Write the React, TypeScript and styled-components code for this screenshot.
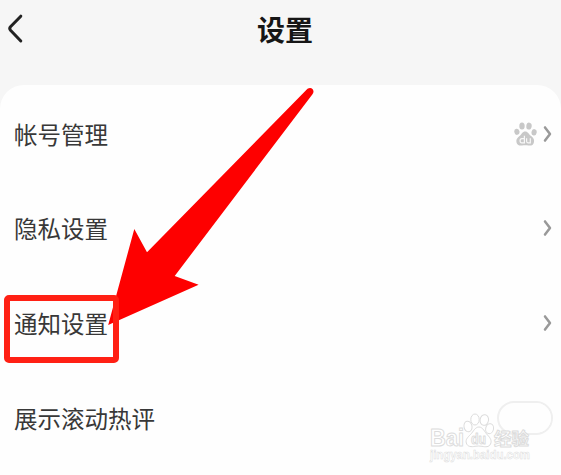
import React, { FC } from 'react';
import styled, { createGlobalStyle } from 'styled-components';

type RowProps = {
    title: string
    children?: React.ReactNode
}

const Chevron: FC = () => (
    <ChevronIcon width="10" height="18" viewBox="0 0 10 18">
        <path d="M2 2.4 L7 9 L2 15.6" />
    </ChevronIcon>
)

const Row: FC<RowProps> = ({title, children}) => (
    <RowBlock>
        <RowTitle>{title}</RowTitle>
        <RowValue>{children}</RowValue>
    </RowBlock>
)

const Paw: FC = () => (
    <svg width="23" height="24" viewBox="0 0 23 24">
        <g fill="#c8c8c8">
            <ellipse cx="2.9" cy="9.8" rx="2.6" ry="3.1" transform="rotate(-10 2.9 9.8)" />
            <ellipse cx="8" cy="4" rx="2.7" ry="3.6" />
            <ellipse cx="15" cy="4.1" rx="2.7" ry="3.5" transform="rotate(8 15 4.1)" />
            <ellipse cx="20.1" cy="10.3" rx="2.6" ry="3.2" transform="rotate(10 20.1 10.3)" />
            <path d="M11.2 9.5 C14 9.5 14.8 12.2 16.8 13.8 C19 15.5 20.6 17.3 20 20 C19.4 23.6 16.8 23.8 14.5 23.5 C12.5 23.2 10 23.2 8 23.5 C5.4 23.9 3 23.2 2.4 20 C1.8 17.2 3.8 15.4 5.8 13.8 C7.7 12.2 8.3 9.5 11.2 9.5 Z" />
        </g>
        <g fill="none" stroke="#f8f8f8" strokeWidth="1.2">
            <path d="M10.4 13.8 V20.8 H7.8 C5.5 20.8 5.5 16.6 7.8 16.6 H10.4" />
            <path d="M12.6 16.2 V19.3 C12.6 20.4 13 20.8 14 20.8 H16.3 V16.2" />
        </g>
    </svg>
)

const Watermark: FC = () => (
    <WatermarkBlock width="120" height="64" viewBox="420 411 120 64">
        <g fill="#fff" stroke="#dcdcdc" strokeWidth="1" strokeLinejoin="round">
            <Latin x="430" y="446" fontSize="24" textLength="34" lengthAdjust="spacingAndGlyphs">Bai</Latin>
            <ellipse cx="468" cy="426.5" rx="4" ry="5.4" transform="rotate(-12 468 426.5)" />
            <ellipse cx="475" cy="419.5" rx="4.2" ry="5.5" />
            <ellipse cx="484.3" cy="420" rx="4.2" ry="5.4" transform="rotate(10 484.3 420)" />
            <ellipse cx="489.6" cy="428.7" rx="3.9" ry="5" transform="rotate(12 489.6 428.7)" />
            <path d="M479 427 C483 427 484.5 432 487.5 435 C490.5 438 492 441 490.5 444 C489 447.3 485.5 447 482 446.3 C479.5 445.9 477.5 445.9 475 446.3 C471.5 447 467.5 447 466.3 443 C465.3 439.5 468 437 470.5 434.5 C473.5 431.5 475 427 479 427 Z" />
            <Latin x="471" y="443.5" fontSize="14" textLength="15" lengthAdjust="spacingAndGlyphs">du</Latin>
            <text x="494" y="445" fontSize="17.5" fontWeight="700" textLength="35" lengthAdjust="spacingAndGlyphs">经验</text>
            <Latin x="430" y="459" fontSize="12" strokeWidth="0.5" textLength="100" lengthAdjust="spacingAndGlyphs">jingyan.baidu.com</Latin>
        </g>
    </WatermarkBlock>
)

export default function App() {
    return (
        <Screen>
            <GlobalStyle />
            <Header>
                <BackButton aria-label="返回">
                    <svg width="18" height="32" viewBox="0 0 18 32">
                        <path d="M14.8 3.2 L4.5 13.8 Q3 15.5 4.5 17.2 L14.8 28" />
                    </svg>
                </BackButton>
                <Title>设置</Title>
            </Header>
            <Card>
                <Row title="帐号管理"><Paw /><Chevron /></Row>
                <Row title="隐私设置"><Chevron /></Row>
                <Row title="通知设置"><Chevron /></Row>
                <Row title="展示滚动热评"><Switch><Knob /></Switch></Row>
            </Card>
            <Arrow width="220" height="250" viewBox="100 80 220 250">
                <path d="M307.5 88.8 Q310.5 86.8 312.7 89.2 Q314.5 91.8 312.3 94.4 L174.7 276 L198.6 284.7 L108.2 325 L134.3 229 L147 252.2 Z" />
            </Arrow>
            <Highlight />
            <Watermark />
        </Screen>
    )
}

const GlobalStyle = createGlobalStyle`
  body {
    margin: 0;
    overflow: hidden;
    background: #fff;
  }
`

const Screen = styled.div`
  position: relative;
  width: 561px;
  height: 475px;
  overflow: hidden;
  background: #f6f6f6;
  color: #383838;
  font-family: "Noto Sans CJK SC", sans-serif;
`

const Header = styled.header`
  display: grid;
  grid-template-columns: 40px 1fr 40px;
  align-items: center;
  height: 60px;
  margin-bottom: 25px;
`

const BackButton = styled.button`
  display: flex;
  padding: 0 0 3px 6px;
  border: 0;
  background: none;

  path {
    fill: none;
    stroke: #222;
    stroke-width: 3;
    stroke-linecap: round;
    stroke-linejoin: round;
  }
`

const Title = styled.h1`
  margin: 0;
  padding: 0 0 2px 9px;
  color: #161616;
  font-size: 28px;
  font-weight: 700;
  line-height: 58px;
  text-align: center;
`

const Card = styled.main`
  height: 400px;
  padding-top: 1.4px;
  box-sizing: border-box;
  border-radius: 24px 24px 0 0;
  background: #fefefe;
`

const RowBlock = styled.div`
  display: flex;
  align-items: center;
  justify-content: space-between;
  height: 94.7px;
  padding: 0 8px 0 14px;
`

const RowTitle = styled.span`
  font-size: 23.5px;
  line-height: 34px;
`

const RowValue = styled.div`
  display: flex;
  align-items: center;
  gap: 6px;
`

const ChevronIcon = styled.svg`
  fill: none;
  stroke: #999;
  stroke-width: 2.5;
  stroke-linecap: round;
  stroke-linejoin: round;
`

const Switch = styled.div`
  display: flex;
  justify-content: flex-end;
  box-sizing: border-box;
  width: 56px;
  height: 34px;
  border: 2px solid #efefef;
  border-radius: 17px;
`

const Knob = styled.div`
  width: 30px;
  height: 30px;
  border-radius: 50%;
  background: #fefefe;
`

// annotations drawn over the settings list
const Arrow = styled.svg`
  position: absolute;
  left: 100px;
  top: 80px;
  fill: #fe0000;
`

const Highlight = styled.div`
  position: absolute;
  left: 4px;
  top: 295px;
  box-sizing: border-box;
  width: 115px;
  height: 68px;
  border: 6px solid #ff2014;
  border-radius: 5px;
`

const WatermarkBlock = styled.svg`
  position: absolute;
  left: 420px;
  top: 411px;
`

const Latin = styled.text`
  font-family: "Liberation Sans", sans-serif;
  font-weight: 700;
`
